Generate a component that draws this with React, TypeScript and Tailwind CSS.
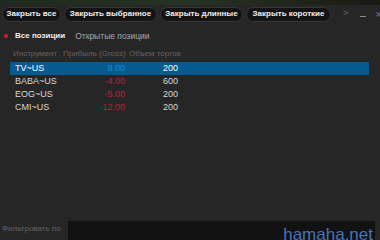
import React from 'react';

const rows = [
  { sym: 'TV~US', pnl: '8.00', vol: '200', selected: true },
  { sym: 'BABA~US', pnl: '-4.00', vol: '600' },
  { sym: 'EOG~US', pnl: '-5.00', vol: '200' },
  { sym: 'CMI~US', pnl: '-12.00', vol: '200' },
];

const buttons = [
  { label: 'Закрыть все', w: 'w-[59px]' },
  { label: 'Закрыть выбранное', w: 'w-[93px]' },
  { label: 'Закрыть длинные', w: 'w-[83px]' },
  { label: 'Закрыть короткие', w: 'w-[85px]' },
];

export default function App() {
  return (
    <div
      className="w-[380px] h-[240px] overflow-hidden bg-[#262626] text-white flex flex-col relative"
      style={{ fontFamily: '"Liberation Sans", Arial, sans-serif' }}
    >
      {/* strip of the chart behind the panel */}
      <div className="h-[5px] bg-gradient-to-r from-[#1d2a1d] via-[#263423] to-[#1a1a12]" />

      {/* Action buttons */}
      <div className="flex items-center h-[16px] mt-[1px] pl-[2px] gap-[3px]">
        {buttons.map((b) => (
          <button
            key={b.label}
            className={
              b.w +
              ' shrink-0 h-[15px] rounded-full bg-[#131313] border border-[#363636] text-[8px] font-bold leading-none text-[#f0f0f0] whitespace-nowrap'
            }
          >
            {b.label}
          </button>
        ))}
        <div className="flex items-center ml-[9px] text-[#6a6a6a]">
          <span className="text-[9px]">&gt;</span>
          <span className="w-[6px] h-[1px] bg-[#8a8a8a] ml-[12px] mt-[4px]" />
          <span className="text-[10px] ml-[9px] text-[#777]">×</span>
        </div>
      </div>

      {/* Tabs */}
      <div className="flex items-center h-[12px] mt-[8px] pl-[4px] whitespace-nowrap">
        <span className="w-[4px] h-[4px] rounded-full bg-[#d0202a]" />
        <span className="ml-[7px] text-[8px] font-bold text-[#eeeeee]">Все позиции</span>
        <span className="ml-[10px] text-[8.5px] text-[#a8a8a8]">Открытые позиции</span>
      </div>

      {/* Table header */}
      <div className="flex items-center h-[12px] mt-[6px] pl-[13px] text-[8px] text-[#646464] whitespace-nowrap">
        <span className="w-[45px]">Инструмент</span>
        <span className="w-[5px] text-[#444]">:</span>
        <span className="w-[62px]">Прибыль (Gross)</span>
        <span className="w-[4px] text-[#444]">:</span>
        <span className="w-[53px]">Объем торгов</span>
        <span className="text-[#444]">:</span>
      </div>

      {/* Rows */}
      <div className="flex flex-col mt-[2px]">
        {rows.map((r) => (
          <div
            key={r.sym}
            className={
              'flex items-center h-[13px] ml-[10px] mr-[11px] text-[9px] whitespace-nowrap ' +
              (r.selected ? 'bg-[#055b8f] text-white' : 'text-[#d8d8d8]')
            }
          >
            <span className="w-[50px] pl-[5px]">{r.sym}</span>
            <span
              className={
                'w-[65px] text-right ' + (r.selected ? 'text-[#1b8fd6]' : 'text-[#b8243a]')
              }
            >
              {r.pnl}
            </span>
            <span className="w-[53px] text-right">{r.vol}</span>
          </div>
        ))}
      </div>

      <div className="flex-1" />

      {/* Filter */}
      <div className="flex items-end h-[19px] pl-[2px]">
        <span className="text-[8px] text-[#646464] mb-[5px] w-[66px] whitespace-nowrap">Фильтровать по</span>
        <div className="flex-1 h-[19px] bg-[#121212] mr-[5px] rounded-tl-[2px]" />
      </div>

      <div className="absolute right-[7px] bottom-[-3px] text-[17px] text-[#4a72b8] leading-none">
        hamaha.net
      </div>
    </div>
  );
}
